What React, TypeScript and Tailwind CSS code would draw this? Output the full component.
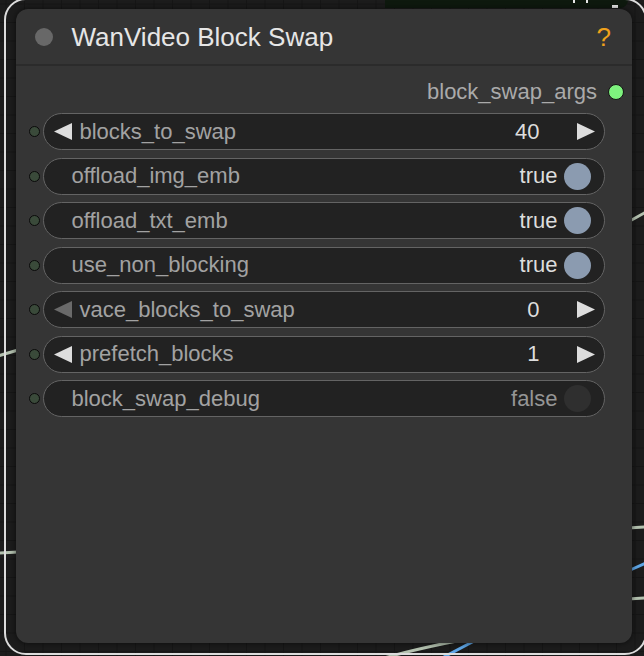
import React from "react";

type Row =
  | { type: "num"; label: string; value: string; leftDim?: boolean }
  | { type: "bool"; label: string; value: boolean };

const rows: Row[] = [
  { type: "num", label: "blocks_to_swap", value: "40" },
  { type: "bool", label: "offload_img_emb", value: true },
  { type: "bool", label: "offload_txt_emb", value: true },
  { type: "bool", label: "use_non_blocking", value: true },
  { type: "num", label: "vace_blocks_to_swap", value: "0", leftDim: true },
  { type: "num", label: "prefetch_blocks", value: "1" },
  { type: "bool", label: "block_swap_debug", value: false },
];

function LeftArrow({ dim }: { dim?: boolean }) {
  return (
    <svg width="18" height="17" viewBox="0 0 18 17" className="shrink-0">
      <polygon points="18,0 0,8.5 18,17" fill={dim ? "#6a6a6a" : "#dddddd"} />
    </svg>
  );
}

function RightArrow() {
  return (
    <svg width="18" height="17" viewBox="0 0 18 17" className="shrink-0">
      <polygon points="0,0 18,8.5 0,17" fill="#dddddd" />
    </svg>
  );
}

function Background() {
  const vlines = [];
  for (let x = 6; x < 644; x += 18.5) vlines.push(x);
  const hlines = [];
  for (let y = 4; y < 656; y += 18.5) hlines.push(y);
  return (
    <svg className="absolute inset-0" width="644" height="656">
      {vlines.map((x, i) => (
        <line key={"v" + i} x1={x} y1={0} x2={x} y2={656} stroke="#161616" strokeWidth="1" />
      ))}
      {hlines.map((y, i) => (
        <line key={"h" + i} x1={0} y1={y} x2={644} y2={y} stroke="#161616" strokeWidth="1" />
      ))}
      {/* wires */}
      <path d="M -2 356 L 18 350" stroke="#b4c2b0" strokeWidth="3" fill="none" />
      <path d="M -2 553 L 18 552" stroke="#b4c2b0" strokeWidth="3" fill="none" />
      <path d="M 628 222 L 646 212" stroke="#b4c2b0" strokeWidth="3" fill="none" />
      <path d="M 628 528 L 646 527" stroke="#b4c2b0" strokeWidth="3" fill="none" />
      <path d="M 628 571 L 646 563" stroke="#5ea6e6" strokeWidth="3" fill="none" />
      <path d="M 628 599 L 646 598" stroke="#b4c2b0" strokeWidth="3" fill="none" />
      <path d="M 384 658 Q 420 648 462 640" stroke="#b4c2b0" strokeWidth="3" fill="none" />
      <path d="M 442 658 L 476 640" stroke="#5ea6e6" strokeWidth="3" fill="none" />
    </svg>
  );
}

export default function App() {
  return (
    <div className="relative w-[644px] h-[656px] overflow-hidden bg-[#1c1c1c] font-['Liberation_Sans',Arial,sans-serif]">
      <Background />

      {/* node above (partially visible) */}
      <div className="absolute left-[385px] top-0 w-[243px] h-[8px] bg-[#0e190e] rounded-br-[8px]" />
      <div className="absolute left-[573px] top-0 w-[2px] h-[3px] bg-[#e8e8e8]" />
      <div className="absolute left-[586px] top-0 w-[2px] h-[3px] bg-[#e8e8e8]" />
      <div className="absolute left-[612px] top-[5px] w-[6px] h-[3px] bg-[#e8e8e8]" />

      {/* selection outline */}
      <div className="absolute left-[4px] top-[-2px] w-[643px] h-[657px] rounded-[22px] border-2 border-[#dcdcdc]" />

      {/* node */}
      <div className="absolute left-[16px] top-[9px] w-[616px] h-[634px] rounded-[12px] bg-[#353535] flex flex-col shadow-[0_0_6px_rgba(0,0,0,0.6)]">
        {/* title */}
        <div className="h-[57px] flex items-center border-b-2 border-[#2b2b2b] pl-[18.5px] pr-[21px]">
          <div className="w-[18px] h-[18px] rounded-full bg-[#686868] shrink-0" />
          <div className="ml-[19px] text-[26px] leading-none text-[#e6e6e6] whitespace-nowrap">
            WanVideo Block Swap
          </div>
          <div className="ml-auto text-[26px] leading-none text-[#f0a21c]">?</div>
        </div>

        {/* output */}
        <div className="mt-[15px] h-[22px] flex items-center justify-end pr-[8px]">
          <span className="text-[22px] leading-none text-[#aaaaaa]">block_swap_args</span>
          <div className="ml-[11px] w-[16px] h-[16px] rounded-full bg-[#7ef27e] border-[1.5px] border-[#151515]" />
        </div>

        {/* widgets */}
        <div className="mt-[10px] flex flex-col gap-[7.5px]">
          {rows.map((r) => (
            <div key={r.label} className="h-[37px] flex items-center">
              <div className="ml-[12.5px] w-[11px] h-[11px] rounded-full bg-[#3a4a3a] border-[1.5px] border-[#0a0a0a] shrink-0" />
              <div className="ml-[3.5px] w-[562px] h-[37px] rounded-full bg-[#222222] border-[1.5px] border-[#646464] flex items-center text-[22px] leading-none">
                {r.type === "num" ? (
                  <>
                    <div className="ml-[9.5px]">
                      <LeftArrow dim={r.leftDim} />
                    </div>
                    <span className="ml-[8px] text-[#a2a2a2] whitespace-nowrap">{r.label}</span>
                    <span className="ml-auto text-[#dddddd]">{r.value}</span>
                    <div className="ml-[37px] mr-[9.5px]">
                      <RightArrow />
                    </div>
                  </>
                ) : (
                  <>
                    <span className="ml-[27.5px] text-[#a2a2a2] whitespace-nowrap">{r.label}</span>
                    <span className={"ml-auto " + (r.value ? "text-[#dddddd]" : "text-[#959595]")}>
                      {r.value ? "true" : "false"}
                    </span>
                    <div
                      className={
                        "ml-[6.5px] mr-[13px] w-[27px] h-[27px] rounded-full shrink-0 " +
                        (r.value ? "bg-[#8b9bb0]" : "bg-[#2f2f2f]")
                      }
                    />
                  </>
                )}
              </div>
            </div>
          ))}
        </div>
      </div>
    </div>
  );
}
